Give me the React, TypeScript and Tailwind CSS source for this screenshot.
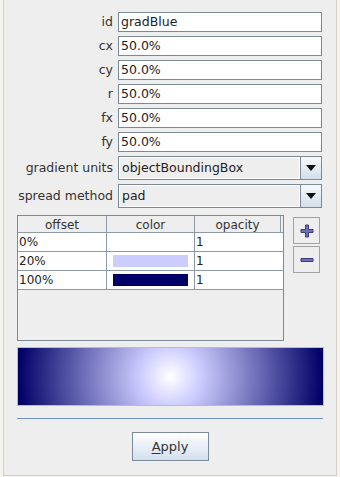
const fields = [
  { label: "id", value: "gradBlue" },
  { label: "cx", value: "50.0%" },
  { label: "cy", value: "50.0%" },
  { label: "r", value: "50.0%" },
  { label: "fx", value: "50.0%" },
  { label: "fy", value: "50.0%" },
];

const stops = [
  { offset: "0%", color: "", opacity: "1" },
  { offset: "20%", color: "bg-[#ccccff]", opacity: "1" },
  { offset: "100%", color: "bg-[#000066]", opacity: "1" },
];

function Combo({ value }: { value: string }) {
  return (
    <div className="flex h-[24px] border border-[#7a8a99] bg-[#eeeeee]">
      <div className="flex flex-1 items-center border border-white pl-[2px] text-[#222]">{value}</div>
      <div className="flex w-[21px] items-center justify-center border-l border-[#7a8a99] bg-gradient-to-b from-[#f6f9fc] to-[#d3deea]">
        <svg width="10" height="6" viewBox="0 0 10 6">
          <path d="M0 0h10L5 6z" fill="#111" />
        </svg>
      </div>
    </div>
  );
}

function IconButton({ kind }: { kind: "plus" | "minus" }) {
  return (
    <button
      type="button"
      className="flex h-[27px] w-[27px] items-center justify-center border border-[#a3a3a3] bg-[#eeeeee]"
    >
      <svg width="16" height="16" viewBox="0 0 16 16">
        {kind === "plus" ? (
          <path d="M6.5 2h3v4.5H14v3H9.5V14h-3V9.5H2v-3h4.5z" fill="#6f6fb8" stroke="#3c3c78" strokeWidth="1" />
        ) : (
          <path d="M2 6.5h12v3H2z" fill="#6f6fb8" stroke="#3c3c78" strokeWidth="1" />
        )}
      </svg>
    </button>
  );
}

export default function App() {
  return (
    <div className="h-[477px] w-[340px] bg-[#f5f3ef] px-[3px] pb-[1px] font-['DejaVu_Sans',sans-serif] text-[12.5px] text-[#333]">
      <div className="flex h-full flex-col border-x border-b border-[#d5cfc5] bg-[#eeeeee] px-[13px] pt-[12px]">
        <div className="grid grid-cols-[96px_204px] gap-x-[5px] gap-y-[4px]">
          {fields.map((f) => (
            <div key={f.label} className="contents">
              <div className="flex items-center justify-end">{f.label}</div>
              <div className="flex h-[20px] items-center border border-[#7a8a99] bg-white pl-[2px] text-[#222]">
                {f.value}
              </div>
            </div>
          ))}
          <div className="flex items-center justify-end">gradient units</div>
          <Combo value="objectBoundingBox" />
          <div className="flex items-center justify-end">spread method</div>
          <Combo value="pad" />
        </div>

        <div className="mt-[7px] flex gap-[9px]">
          <div className="flex h-[126px] w-[267px] flex-col border border-[#7a8a99] bg-[#eeeeee] text-[12px]">
            <div className="grid h-[17px] grid-cols-[89px_88px_1fr] border-b border-[#8e9aa8] bg-[#eeeeee]">
              <div className="flex items-center justify-center border-r border-[#8e9aa8]">offset</div>
              <div className="flex items-center justify-center border-r border-[#8e9aa8]">color</div>
              <div className="mr-[2px] flex items-center justify-center border-r border-[#8e9aa8]">opacity</div>
            </div>
            {stops.map((s) => (
              <div key={s.offset} className="grid h-[19px] grid-cols-[89px_88px_1fr] border-b border-[#8e9aa8] bg-white text-[#222]">
                <div className="flex items-center border-r border-[#8e9aa8] pl-[1px]">{s.offset}</div>
                <div className="flex items-center border-r border-[#8e9aa8] px-[6px] py-[3px]">
                  {s.color ? <div className={`h-full w-full ${s.color}`} /> : null}
                </div>
                <div className="flex items-center pl-[1px]">{s.opacity}</div>
              </div>
            ))}
          </div>
          <div className="flex flex-col gap-[2px] pt-[2px]">
            <IconButton kind="plus" />
            <IconButton kind="minus" />
          </div>
        </div>

        <div className="mt-[6px] h-[59px] w-[307px] border border-[#a9c0dc] bg-[radial-gradient(circle_farthest-side,#ffffff_0%,#ccccff_20%,#000066_100%)]" />

        <div className="mt-[12px] h-px bg-[#6f8fcf]" />

        <button
          type="button"
          className="mt-[13px] flex h-[29px] w-[77px] items-center justify-center self-center border border-[#7a8a99] bg-gradient-to-b from-white to-[#d3e0ed] text-[13px] text-[#333]"
        >
          <span className="underline underline-offset-2">A</span>pply
        </button>
      </div>
    </div>
  );
}
